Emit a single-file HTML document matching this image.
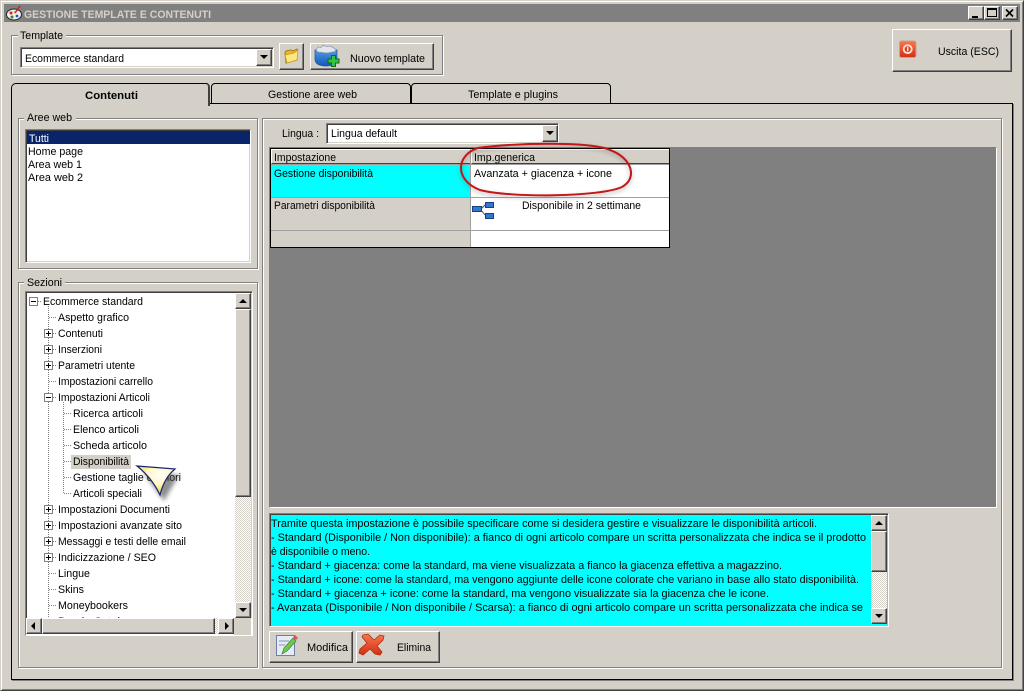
<!DOCTYPE html>
<html lang="it"><head><meta charset="utf-8"><title>Gestione template e contenuti</title>
<style>
html,body{margin:0;padding:0;width:1024px;height:691px;overflow:hidden;background:#d4d0c8}
.a{position:absolute;box-sizing:border-box}
.btn{position:absolute;box-sizing:border-box;background:#d4d0c8;border:1px solid;border-color:#fff #404040 #404040 #fff;box-shadow:inset -1px -1px 0 #808080}
.sunk{position:absolute;box-sizing:border-box;background:#fff;border:1px solid;border-color:#808080 #fff #fff #808080;box-shadow:inset 1px 1px 0 #404040,inset -1px -1px 0 #d4d0c8}
.grp{position:absolute;box-sizing:border-box;border:1px solid #808080;box-shadow:1px 1px 0 #fff,inset 1px 1px 0 #fff}
.dither{position:absolute;background:repeating-conic-gradient(#fff 0 25%,#d4d0c8 0 50%) 0 0/2px 2px}
.up::after,.dn::after,.lf::after,.rt::after{content:"";position:absolute;width:0;height:0;border:4px solid transparent}
.up::after{left:3px;top:1px;border-bottom-color:#000}
.dn::after{left:3px;top:5px;border-top-color:#000}
.lf::after{left:0;top:3px;border-right-color:#000}
.rt::after{left:6px;top:3px;border-left-color:#000}
svg{position:absolute;left:0;top:0}
text{font-family:"Liberation Sans",sans-serif;font-size:11px;fill:#000}
</style></head><body>
<div class="a" style="left:0;top:0;width:1024px;height:691px;border:1px solid;border-color:#d4d0c8 #404040 #404040 #d4d0c8;box-shadow:inset 1px 1px 0 #fff,inset -1px -1px 0 #808080"></div>
<div class="a" style="left:4px;top:4px;width:1016px;height:18px;background:#808080"></div>

<div class="btn" style="left:968px;top:6px;width:16px;height:14px"><div class="a" style="left:3px;top:9px;width:6px;height:2px;background:#000"></div></div>
<div class="btn" style="left:984px;top:6px;width:16px;height:14px"><div class="a" style="left:2px;top:1px;width:10px;height:9px;border:1px solid #000;border-top-width:2px"></div></div>
<div class="btn" style="left:1002px;top:6px;width:16px;height:14px"></div>

<div class="grp" style="left:11px;top:35px;width:432px;height:40px"></div>
<div class="a" style="left:18px;top:30px;width:48px;height:10px;background:#d4d0c8"></div>
<div class="sunk" style="left:20px;top:47px;width:254px;height:21px"></div>
<div class="btn dn" style="left:256px;top:49px;width:16px;height:17px"></div>
<div class="btn" style="left:279px;top:43px;width:25px;height:27px"></div>
<div class="btn" style="left:310px;top:43px;width:124px;height:27px"></div>
<div class="btn" style="left:892px;top:29px;width:120px;height:43px"></div>

<!-- tabs -->
<div class="a" style="left:11px;top:103px;width:1002px;height:577px;background:#d4d0c8;border:1px solid #000;box-shadow:1px 1px 0 #808080"></div>
<div class="a" style="left:211px;top:83px;width:200px;height:21px;background:#d4d0c8;border:1px solid #000;border-radius:4px 4px 0 0"></div>
<div class="a" style="left:411px;top:83px;width:200px;height:21px;background:#d4d0c8;border:1px solid #000;border-radius:4px 4px 0 0"></div>
<div class="a" style="left:11px;top:83px;width:199px;height:23px;background:#d4d0c8;border:1px solid #000;border-bottom:0;border-right:2px solid #404040;border-radius:5px 4px 0 0"></div>

<!-- left column -->
<div class="grp" style="left:18px;top:118px;width:240px;height:151px"></div>
<div class="a" style="left:24px;top:112px;width:52px;height:10px;background:#d4d0c8"></div>
<div class="sunk" style="left:25px;top:129px;width:226px;height:134px"></div>
<div class="a" style="left:27px;top:131px;width:223px;height:13px;background:#0a246a"></div>
<div class="grp" style="left:18px;top:282px;width:240px;height:386px"></div>
<div class="a" style="left:24px;top:277px;width:41px;height:10px;background:#d4d0c8"></div>
<div class="sunk" style="left:25px;top:291px;width:228px;height:345px"></div>
<div class="a" style="left:71px;top:455px;width:60px;height:14px;background:#d4d0c8"></div>

<!-- tree lines -->
<svg width="1024" height="691" viewBox="0 0 1024 691" shape-rendering="crispEdges">
<g stroke="#808080" stroke-dasharray="1 1" fill="none">
<path d="M48.500 306V618M63.500 402V493M38 301.500h4M49 317.500h7M53 333.500h3M53 349.500h3M53 365.500h3M49 381.500h7M53 397.500h3M64 413.500h7M64 429.500h7M64 445.500h7M64 461.500h7M64 477.500h7M64 493.500h7M53 509.500h3M53 525.500h3M53 541.500h3M53 557.500h3M49 573.500h7M49 589.500h7M49 605.500h7"/>
</g>
<g fill="#fff" stroke="#808080"><rect x="29.500" y="297.500" width="8" height="8"/>
<rect x="44.500" y="329.500" width="8" height="8"/><rect x="44.500" y="345.500" width="8" height="8"/><rect x="44.500" y="361.500" width="8" height="8"/><rect x="44.500" y="393.500" width="8" height="8"/><rect x="44.500" y="505.500" width="8" height="8"/><rect x="44.500" y="521.500" width="8" height="8"/><rect x="44.500" y="537.500" width="8" height="8"/><rect x="44.500" y="553.500" width="8" height="8"/></g>
<path stroke="#000" d="M31 301.500h5M46 333.500h5M48.500 331v5M46 349.500h5M48.500 347v5M46 365.500h5M48.500 363v5M46 397.500h5M46 509.500h5M48.500 507v5M46 525.500h5M48.500 523v5M46 541.500h5M48.500 539v5M46 557.500h5M48.500 555v5"/>
</svg>

<!-- right panel -->
<div class="grp" style="left:262px;top:118px;width:740px;height:550px"></div>
<div class="sunk" style="left:326px;top:123px;width:233px;height:21px"></div>
<div class="btn dn" style="left:542px;top:125px;width:16px;height:17px"></div>
<div class="a" style="left:269px;top:147px;width:728px;height:361px;background:#808080;border:1px solid;border-color:#808080 #fff #fff #808080"></div>
<div class="a" style="left:270px;top:148px;width:400px;height:100px;background:#000"></div>
<div class="a" style="left:271px;top:149px;width:398px;height:98px;background:#a0a0a0"></div>
<div class="a" style="left:271px;top:149px;width:199px;height:15px;background:#d4d0c8;border-top:1px solid #fff;border-left:1px solid #fff;border-bottom:1px solid #404040"></div>
<div class="a" style="left:471px;top:149px;width:198px;height:15px;background:#d4d0c8;border-top:1px solid #fff;border-left:1px solid #fff;border-bottom:1px solid #404040"></div>
<div class="a" style="left:271px;top:165px;width:199px;height:32px;background:#0ff"></div>
<div class="a" style="left:471px;top:165px;width:198px;height:32px;background:#fff"></div>
<div class="a" style="left:271px;top:198px;width:199px;height:32px;background:#d4d0c8"></div>
<div class="a" style="left:471px;top:198px;width:198px;height:32px;background:#fff"></div>
<div class="a" style="left:271px;top:231px;width:199px;height:16px;background:#d4d0c8"></div>
<div class="a" style="left:471px;top:231px;width:198px;height:16px;background:#fff"></div>

<div class="a" style="left:269px;top:513px;width:620px;height:114px;background:#0ff;border:1px solid;border-color:#808080 #fff #fff #808080;box-shadow:inset 1px 1px 0 #404040"></div>
<div class="btn" style="left:269px;top:631px;width:84px;height:32px"></div>
<div class="btn" style="left:356px;top:631px;width:84px;height:32px"></div>

<!-- text -->
<svg width="1024" height="691" viewBox="0 0 1024 691">
<text x="24" y="18" textLength="187" lengthAdjust="spacingAndGlyphs" font-weight="bold" style="fill:#d4d0c8">GESTIONE TEMPLATE E CONTENUTI</text>
<text x="20" y="39" textLength="43" lengthAdjust="spacingAndGlyphs">Template</text>
<text x="25" y="62" textLength="99" lengthAdjust="spacingAndGlyphs">Ecommerce standard</text>
<text x="350" y="62" textLength="75" lengthAdjust="spacingAndGlyphs">Nuovo template</text>
<text x="938" y="55" textLength="61" lengthAdjust="spacingAndGlyphs">Uscita (ESC)</text>
<text x="85" y="99" textLength="53" lengthAdjust="spacingAndGlyphs" font-weight="bold">Contenuti</text>
<text x="268" y="98" textLength="89" lengthAdjust="spacingAndGlyphs">Gestione aree web</text>
<text x="468" y="98" textLength="90" lengthAdjust="spacingAndGlyphs">Template e plugins</text>
<text x="27" y="121" textLength="45" lengthAdjust="spacingAndGlyphs">Aree web</text>
<text x="29" y="142" textLength="20" lengthAdjust="spacingAndGlyphs" style="fill:#fff">Tutti</text>
<text x="28" y="155" textLength="55" lengthAdjust="spacingAndGlyphs">Home page</text>
<text x="28" y="168" textLength="54" lengthAdjust="spacingAndGlyphs">Area web 1</text>
<text x="28" y="181" textLength="55" lengthAdjust="spacingAndGlyphs">Area web 2</text>
<text x="27" y="286" textLength="35" lengthAdjust="spacingAndGlyphs">Sezioni</text>
<text x="282" y="137" textLength="37" lengthAdjust="spacingAndGlyphs">Lingua :</text>
<text x="331" y="137" textLength="66" lengthAdjust="spacingAndGlyphs">Lingua default</text>
<text x="274" y="161" textLength="62" lengthAdjust="spacingAndGlyphs">Impostazione</text>
<text x="474" y="161" textLength="61" lengthAdjust="spacingAndGlyphs">Imp.generica</text>
<text x="274" y="177" textLength="99" lengthAdjust="spacingAndGlyphs">Gestione disponibilità</text>
<text x="474" y="177" textLength="138" lengthAdjust="spacingAndGlyphs">Avanzata + giacenza + icone</text>
<text x="274" y="209" textLength="101" lengthAdjust="spacingAndGlyphs">Parametri disponibilità</text>
<text x="522" y="209" textLength="119" lengthAdjust="spacingAndGlyphs">Disponibile in 2 settimane</text>
<text x="43" y="305" textLength="100" lengthAdjust="spacingAndGlyphs">Ecommerce standard</text>
<text x="58" y="321" textLength="71" lengthAdjust="spacingAndGlyphs">Aspetto grafico</text>
<text x="58" y="337" textLength="45" lengthAdjust="spacingAndGlyphs">Contenuti</text>
<text x="58" y="353" textLength="44" lengthAdjust="spacingAndGlyphs">Inserzioni</text>
<text x="58" y="369" textLength="77" lengthAdjust="spacingAndGlyphs">Parametri utente</text>
<text x="58" y="385" textLength="95" lengthAdjust="spacingAndGlyphs">Impostazioni carrello</text>
<text x="58" y="401" textLength="92" lengthAdjust="spacingAndGlyphs">Impostazioni Articoli</text>
<text x="73" y="417" textLength="70" lengthAdjust="spacingAndGlyphs">Ricerca articoli</text>
<text x="73" y="433" textLength="66" lengthAdjust="spacingAndGlyphs">Elenco articoli</text>
<text x="73" y="449" textLength="74" lengthAdjust="spacingAndGlyphs">Scheda articolo</text>
<text x="73" y="465" textLength="56" lengthAdjust="spacingAndGlyphs">Disponibilità</text>
<text x="73" y="481" textLength="108" lengthAdjust="spacingAndGlyphs">Gestione taglie e colori</text>
<text x="73" y="497" textLength="69" lengthAdjust="spacingAndGlyphs">Articoli speciali</text>
<text x="58" y="513" textLength="112" lengthAdjust="spacingAndGlyphs">Impostazioni Documenti</text>
<text x="58" y="529" textLength="124" lengthAdjust="spacingAndGlyphs">Impostazioni avanzate sito</text>
<text x="58" y="545" textLength="128" lengthAdjust="spacingAndGlyphs">Messaggi e testi delle email</text>
<text x="58" y="561" textLength="98" lengthAdjust="spacingAndGlyphs">Indicizzazione / SEO</text>
<text x="58" y="577" textLength="32" lengthAdjust="spacingAndGlyphs">Lingue</text>
<text x="58" y="593" textLength="26" lengthAdjust="spacingAndGlyphs">Skins</text>
<text x="58" y="609" textLength="70" lengthAdjust="spacingAndGlyphs">Moneybookers</text>
<text x="58" y="625" textLength="62" lengthAdjust="spacingAndGlyphs">Banda Catal</text>
<text x="271" y="527" textLength="546" lengthAdjust="spacingAndGlyphs">Tramite questa impostazione è possibile specificare come si desidera gestire e visualizzare le disponibilità articoli.</text>
<text x="271" y="541" textLength="595" lengthAdjust="spacingAndGlyphs">- Standard (Disponibile / Non disponibile): a fianco di ogni articolo compare un scritta personalizzata che indica se il prodotto</text>
<text x="271" y="555" textLength="99" lengthAdjust="spacingAndGlyphs">è disponibile o meno.</text>
<text x="271" y="569" textLength="511" lengthAdjust="spacingAndGlyphs">- Standard + giacenza: come la standard, ma viene visualizzata a fianco la giacenza effettiva a magazzino.</text>
<text x="271" y="583" textLength="588" lengthAdjust="spacingAndGlyphs">- Standard + icone: come la standard, ma vengono aggiunte delle icone colorate che variano in base allo stato disponibilità.</text>
<text x="271" y="597" textLength="498" lengthAdjust="spacingAndGlyphs">- Standard + giacenza + icone: come la standard, ma vengono visualizzate sia la giacenza che le icone.</text>
<text x="271" y="611" textLength="592" lengthAdjust="spacingAndGlyphs">- Avanzata (Disponibile / Non disponibile / Scarsa): a fianco di ogni articolo compare un scritta personalizzata che indica se</text>
<text x="307" y="651" textLength="41" lengthAdjust="spacingAndGlyphs">Modifica</text>
<text x="397" y="651" textLength="34" lengthAdjust="spacingAndGlyphs">Elimina</text>
</svg>

<!-- tree scrollbars -->
<div class="a" style="left:26px;top:618px;width:226px;height:17px;background:#fff"></div>
<div class="dither" style="left:235px;top:293px;width:16px;height:325px"></div>
<div class="btn up" style="left:235px;top:293px;width:16px;height:16px"></div>
<div class="btn" style="left:235px;top:309px;width:16px;height:188px"></div>
<div class="btn dn" style="left:235px;top:602px;width:16px;height:16px"></div>
<div class="dither" style="left:26px;top:618px;width:208px;height:16px"></div>
<div class="btn lf" style="left:26px;top:618px;width:16px;height:16px"></div>
<div class="btn" style="left:42px;top:618px;width:173px;height:16px"></div>
<div class="btn rt" style="left:218px;top:618px;width:16px;height:16px"></div>
<div class="a" style="left:234px;top:618px;width:17px;height:17px;background:#d4d0c8"></div>
<!-- memo scrollbar -->
<div class="dither" style="left:871px;top:515px;width:16px;height:109px"></div>
<div class="btn up" style="left:871px;top:515px;width:16px;height:16px"></div>
<div class="btn" style="left:871px;top:531px;width:16px;height:41px"></div>
<div class="btn dn" style="left:871px;top:608px;width:16px;height:16px"></div>

<!-- icons & overlays -->
<svg width="1024" height="691" viewBox="0 0 1024 691">
<defs>
<filter id="sh" x="-30%" y="-30%" width="160%" height="160%"><feGaussianBlur stdDeviation="2"/></filter>
<radialGradient id="yl" cx=".62" cy=".3" r=".7"><stop offset="0" stop-color="#fff"/><stop offset=".5" stop-color="#fff8c0"/><stop offset="1" stop-color="#f0cd30"/></radialGradient>
<linearGradient id="rd" x1="0" y1="0" x2="0" y2="1"><stop offset="0" stop-color="#f57a50"/><stop offset="1" stop-color="#d42d10"/></linearGradient>
<linearGradient id="bl" x1="0" y1="0" x2="0" y2="1"><stop offset="0" stop-color="#4d9be8"/><stop offset="1" stop-color="#1557b5"/></linearGradient>
</defs>
<!-- app icon -->
<ellipse cx="14" cy="14.500" rx="7.500" ry="5.500" fill="#eee" stroke="#222"/>
<circle cx="11" cy="13" r="1.500" fill="#d22"/><circle cx="15" cy="12" r="1.300" fill="#e8c820"/><circle cx="12" cy="17" r="1.500" fill="#2a8a2a"/><circle cx="17" cy="16" r="1.400" fill="#25c"/>
<path d="M15 13 20 6" stroke="#c22" stroke-width="1.500"/>
<!-- window X -->
<path d="M1006 9.500l7 7M1013 9.500l-7 7" stroke="#000" stroke-width="1.600"/>
<!-- folder -->
<path d="M285 53l1-2 5-1 2 1 4-2 0 11-11 3z" fill="#e8b830" stroke="#a87c14"/>
<path d="M285 55l9-2 4-3-1 10-10 3z" fill="#fde77e" stroke="#c09a20" stroke-width=".7"/>
<!-- nuovo template icon -->
<path d="M315 50h22v10q-1 6-11 6t-11-6z" fill="url(#bl)" stroke="#1a4d9a" stroke-width=".7"/>
<path d="M316 50l2-3 3 .5 2-2 4 1 3-.5 3 1.500 3 2-1 2-8 1.500-9-1z" fill="#e2e5ec" stroke="#8a9ab5" stroke-width=".8"/>
<path d="M331.500 55.500h4v3.500h3.500v4h-3.500v3.500h-4v-3.500h-3.500v-4h3.500z" fill="#35c53c" stroke="#0f6a1c"/>
<!-- power -->
<rect x="899.500" y="41" width="16.500" height="16.500" rx="2" fill="url(#rd)" stroke="#c8a090"/>
<circle cx="907.700" cy="49.200" r="4" fill="#e0401c" stroke="#fbe4dc" stroke-width="1.800"/>
<path d="M907.700 46.800v4.500" stroke="#fbe4dc" stroke-width="1.400"/>
<!-- tree icon in cell -->
<g fill="#2f78d0" stroke="#1a3f8a"><rect x="472.500" y="206.500" width="9" height="5"/><rect x="485.500" y="202.500" width="8" height="5"/><rect x="485.500" y="213.500" width="8" height="5"/></g>
<path d="M481 209l4-4M481 210l4 5" stroke="#446" fill="none"/>
<!-- modifica -->
<rect x="276.500" y="635.500" width="18" height="20" fill="#e6ecf6" stroke="#6c80ab"/>
<path d="M279 641h10M279 645h6" stroke="#9fb0cf" stroke-width="1.500"/>
<path d="M282 654l2-6 9-10 3 3-9 10z" fill="#6fc94f" stroke="#3b7d2f" stroke-width=".7"/>
<path d="M293 637l2-2 3 3-2 2z" fill="#e25050"/>
<!-- elimina -->
<path d="M363 635l5-1 6 6 6-5 4 1-1 4-6 6 5 6-2 3-5-1-5-5-7 6-4-2 1-4 7-6-5-6z" fill="url(#rd)" stroke="#b32a0e" stroke-width=".8"/>
<!-- red ellipse -->
<path d="M478 150C510 145 590 143 610 152C632 160 638 180 622 189C600 199 510 200 480 192C454 182 456 157 478 150Z" fill="none" stroke="#555" stroke-width="2" opacity=".45" filter="url(#sh)"/>
<path d="M478 148C510 143 590 141 610 150C632 158 638 178 622 187C600 197 510 198 480 190C454 180 456 155 478 148Z" fill="none" stroke="#c41616" stroke-width="2"/>
<!-- arrow -->
<path d="M143 472 179 475 164 501Z" fill="#444" opacity=".6" filter="url(#sh)"/>
<path d="M137 466 175 469Q164 478 160 495Q152 478 137 466Z" fill="url(#yl)" stroke="#1c2470" stroke-width="1.200"/>
</svg>
</body></html>
